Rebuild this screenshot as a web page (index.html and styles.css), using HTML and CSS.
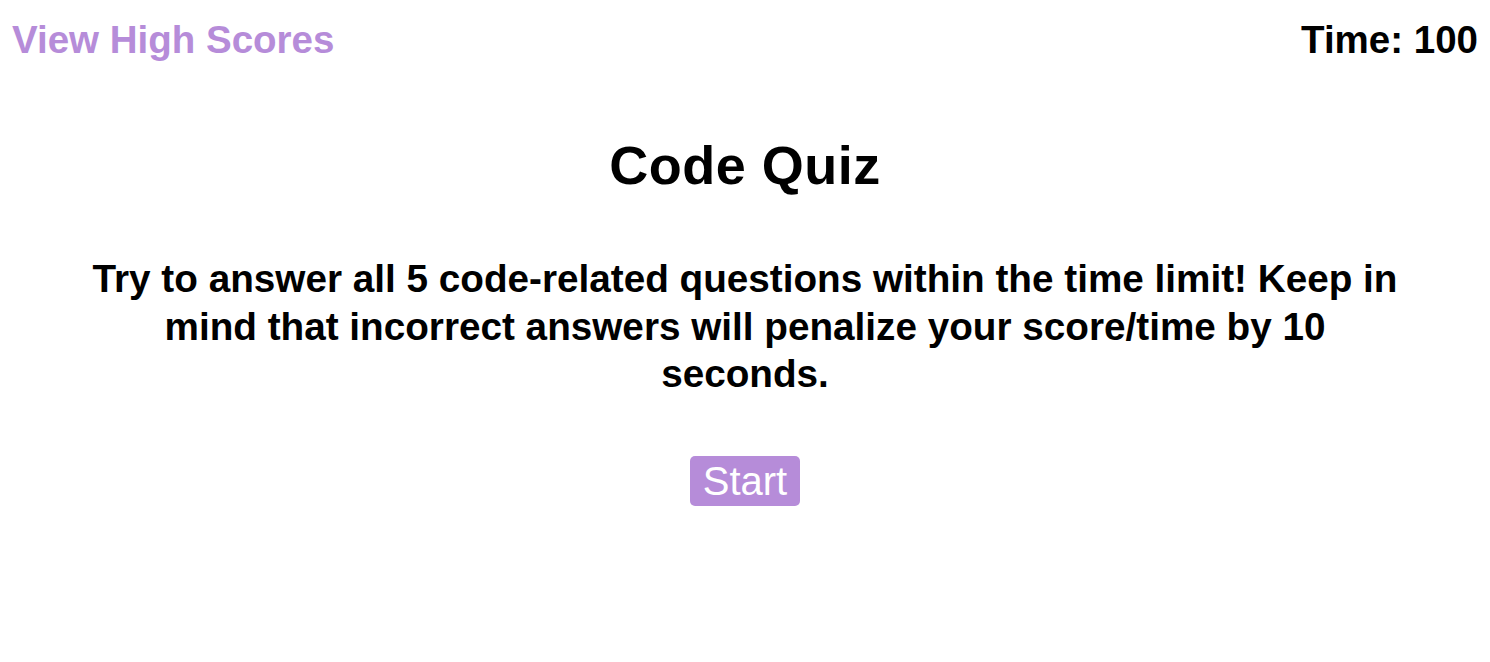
FILE: index.html
```html
<!DOCTYPE html>
<html lang="en">
<head>
<meta charset="utf-8">
<title>Code Quiz</title>
<link rel="stylesheet" href="styles.css">
</head>
<body>
<header class="topbar">
  <a class="highscores-link" href="#">View High Scores</a>
  <div class="timer">Time: <span class="timer-value">100</span></div>
</header>
<main class="intro">
  <h1 class="intro-title">Code Quiz</h1>
  <p class="intro-text">Try to answer all 5 code-related questions within the time limit! Keep in mind that incorrect answers will penalize your score/time by 10 seconds.</p>
  <button class="start-btn" type="button">Start</button>
</main>
</body>
</html>
```
FILE: styles.css
```css
html, body {
  margin: 0;
  padding: 0;
  background: #ffffff;
}

body {
  font-family: "Liberation Sans", Arial, sans-serif;
  font-weight: 700;
  color: #000000;
}

.topbar {
  display: flex;
  justify-content: space-between;
  align-items: flex-start;
  padding: 18px 12px 0 12px;
  font-size: 38.5px;
  line-height: 44px;
}

.highscores-link {
  color: #b68cd9;
  text-decoration: none;
}

.timer {
  color: #000000;
}

.intro {
  display: flex;
  flex-direction: column;
  align-items: center;
  text-align: center;
}

.intro-title {
  margin: 73px 0 0 0;
  font-size: 54px;
  line-height: 60px;
  letter-spacing: 0.5px;
  font-weight: 700;
}

.intro-text {
  margin: 60px 0 0 0;
  max-width: 1330px;
  font-size: 38.7px;
  line-height: 47.5px;
}

.start-btn {
  margin-top: 58.5px;
  padding: 2px 13px 2px 13px;
  border: none;
  border-radius: 5px;
  background: #b68cd9;
  color: #ffffff;
  font-family: "Liberation Sans", Arial, sans-serif;
  font-weight: 400;
  font-size: 40px;
  line-height: 46px;
  cursor: pointer;
}
```
